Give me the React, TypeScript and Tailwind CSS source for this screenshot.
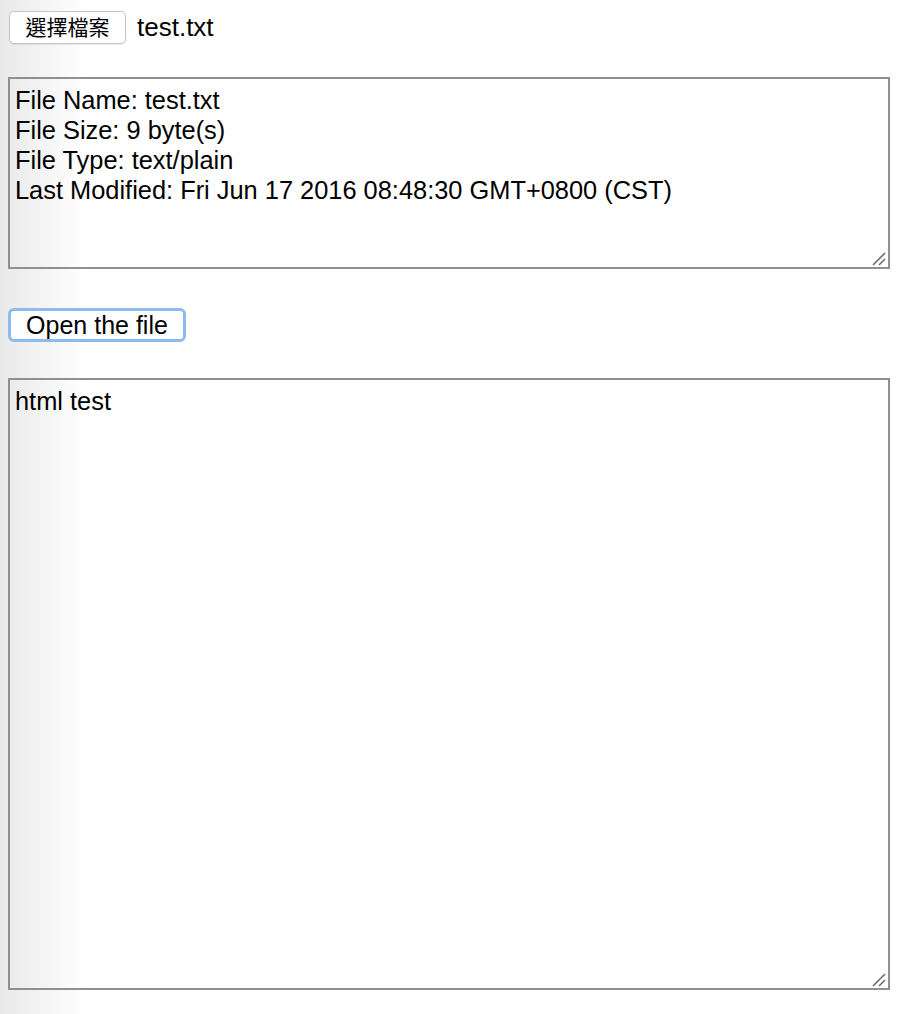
import React from 'react';

const info = [
  'File Name: test.txt',
  'File Size: 9 byte(s)',
  'File Type: text/plain',
  'Last Modified: Fri Jun 17 2016 08:48:30 GMT+0800 (CST)',
].join('\n');

const Grip: React.FC = () => (
  <svg className="absolute right-[4px] bottom-[3px] w-[14px] h-[14px] pointer-events-none" viewBox="0 0 14 14">
    <line x1="1" y1="13" x2="13" y2="1" stroke="#6b6b6b" strokeWidth="1.6" />
    <line x1="7" y1="13" x2="13" y2="7" stroke="#6b6b6b" strokeWidth="1.6" />
  </svg>
);

const Box: React.FC<{ value: string; height: string }> = ({ value, height }) => (
  <div className={`relative w-[882px] ${height}`}>
    <textarea
      readOnly
      value={value}
      className="block w-full h-full resize-none bg-transparent border-2 border-[#909090] px-[5px] pt-[6px] pb-[3px] text-[25.4px] leading-[30px] text-black outline-none overflow-hidden"
      style={{ fontFamily: '"Liberation Sans", Arial, sans-serif' }}
    />
    <Grip />
  </div>
);

export default function App() {
  return (
    <div
      className="min-h-[1014px] w-full bg-[linear-gradient(to_right,#e9e9e9,#ffffff_85px)] pl-[8px] pt-[8px]"
      style={{ fontFamily: '"Liberation Sans", Arial, sans-serif' }}
    >
      <div className="flex items-center">
        <button
          className="ml-[1px] h-[33px] w-[117px] rounded-[5px] border border-[#c4c4c4] bg-white text-[21px] text-black shadow-[0_1px_1px_rgba(0,0,0,0.08)]"
          style={{ fontFamily: '"Liberation Sans", "Noto Sans CJK TC", sans-serif' }}
        >
          選擇檔案
        </button>
        <span className="ml-[11px] text-[26px] text-black">test.txt</span>
      </div>

      <div className="mt-[30px]">
        <Box value={info} height="h-[192px]" />
      </div>

      <button className="mt-[39px] h-[34px] w-[178px] rounded-[6px] border-[3px] border-[#8cbbf2] bg-white text-[25px] leading-none text-black">
        Open the file
      </button>

      <div className="mt-[36px]">
        <Box value="html test" height="h-[612px]" />
      </div>
    </div>
  );
}
